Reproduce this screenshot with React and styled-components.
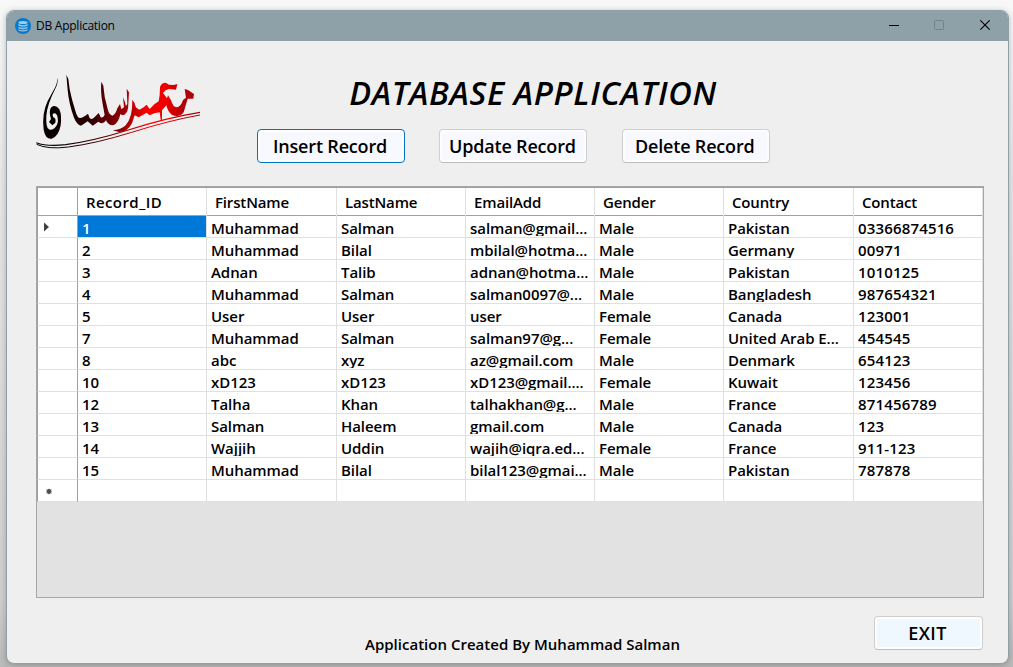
import React from "react";
import styled, { createGlobalStyle } from "styled-components";

const GlobalStyle = createGlobalStyle`
  * { box-sizing: border-box; }
  html, body { margin: 0; height: 100%; overflow: hidden; }
  body {
    font-family: "Open Sans", "Noto Sans", sans-serif;
    color: #000;
    background: linear-gradient(to bottom, #f8f8f8 0, #e6e6e6 30%, #cfcfcf 90%, #b9b9b9 100%);
  }
`;

const Desktop = styled.div`
  height: 667px;
  width: 1013px;
  padding: 10px 4px 3px 6px;
  overflow: hidden;
`;

const Window = styled.main`
  height: 654px;
  display: flex;
  flex-direction: column;
  background: #efefef;
  border: 1px solid #8ea1a8;
  border-radius: 8px;
  overflow: hidden;
  box-shadow: 0 1px 6px rgba(0, 0, 0, 0.24);
`;

const TitleBar = styled.header`
  height: 30px;
  flex: none;
  display: flex;
  align-items: center;
  padding-left: 8px;
  background: #8ea1a8;
`;

const AppName = styled.span`
  margin-left: 5px;
  font-size: 12px;
  line-height: 16px;
  letter-spacing: -0.25px;
  flex: 1;
`;

const Control = styled.span`
  width: 46px;
  height: 30px;
  display: flex;
  align-items: center;
  justify-content: center;
  padding-left: ${(p) => p.$inset || 0};
  padding-bottom: 2px;
`;

const Controls = styled.div`
  display: flex;
`;

const Body = styled.div`
  flex: 1;
  display: flex;
  flex-direction: column;
  padding: 24px 24px 13px 29px;
`;

const Top = styled.section`
  display: flex;
  height: 121px;
  margin-left: -11px;
`;

const Heading = styled.div`
  width: 513px;
  margin-left: 42px;
`;

const Title = styled.h1`
  margin: 0;
  height: 64px;
  padding-top: 6px;
  padding-left: 39px;
  text-align: center;
  font-size: 32.5px;
  line-height: 44px;
  font-weight: 550;
  font-style: italic;
  white-space: nowrap;
  letter-spacing: 0.65px;
`;

const Actions = styled.div`
  display: grid;
  grid-template-columns: 148px 148px 148px;
  column-gap: 34.4px;
`;

const Button = styled.button`
  width: ${(p) => p.$width || "148px"};
  height: 34px;
  padding: 0 2px 1px 0;
  font: 550 18px/24px "Open Sans", "Noto Sans", sans-serif;
  letter-spacing: ${(p) => p.$tracking || "-0.18px"};
  color: #000;
  white-space: nowrap;
  background: ${(p) => p.$fill || "#f8f8ff"};
  border: 1px solid ${(p) => (p.$focused ? "#0074cc" : "#cfcfcf")};
  border-bottom-color: ${(p) => (p.$focused ? "#0074cc" : "#bdbdbd")};
  border-radius: 4px;
  box-shadow: inset 0 0 0 2px #fdfdfd;
`;

const Grid = styled.section`
  height: 412px;
  flex: none;
  background: #e2e2e2;
  border: 1px solid #a5a7ac;
`;

const columns = "41px 129px 130px 129px 129px 129px 130px 129px";

const HeaderRow = styled.div`
  display: grid;
  grid-template-columns: ${columns};
  height: 29px;
  background: #fff;
  border-top: 1px solid #a0a0a0;
  border-bottom: 1px solid #a0a0a0;
`;

const HeadCell = styled.div`
  padding-left: 8px;
  font-size: 15px;
  line-height: 29px;
  font-weight: 550;
  letter-spacing: ${(p) => p.$tracking || "-0.15px"};
  border-right: 1px solid #e0e0e0;
`;

const HeadCorner = styled(HeadCell)`
  border-left: 1px solid #a0a0a0;
  border-right-color: #a0a0a0;
`;

const Row = styled.div`
  display: grid;
  grid-template-columns: ${columns};
  height: 22px;
  background: #fff;
`;

const Cell = styled.div`
  height: 22px;
  padding: 0 4px;
  border-right: 1px solid #e0e0e0;
  border-bottom: 1px solid #e0e0e0;
  background: ${(p) => (p.$selected ? "#0078d7" : "#fff")};
  color: ${(p) => (p.$selected ? "#fff" : "#000")};
`;

const CellText = styled.div`
  height: 20px;
  font-size: 15px;
  line-height: 25px;
  font-weight: 550;
  letter-spacing: ${(p) => (p.$numeric ? "0.16px" : "-0.06px")};
  white-space: nowrap;
  overflow: hidden;
`;

const RowHeader = styled.div`
  display: flex;
  align-items: center;
  padding-left: 6px;
  border-left: 1px solid #a0a0a0;
  border-right: 1px solid #a0a0a0;
  border-bottom: 1px solid #e0e0e0;
`;

const Footer = styled.footer`
  display: flex;
  justify-content: space-between;
  padding: 18px 1px 0 329px;
`;

const Credit = styled.p`
  margin: 17px 0 0;
  font-size: 15px;
  line-height: 22px;
  font-weight: 550;
  white-space: nowrap;
  letter-spacing: 0.01px;
`;

const records = [
  ["1", "Muhammad", "Salman", "salman@gmail...", "Male", "Pakistan", "03366874516"],
  ["2", "Muhammad", "Bilal", "mbilal@hotma...", "Male", "Germany", "00971"],
  ["3", "Adnan", "Talib", "adnan@hotma...", "Male", "Pakistan", "1010125"],
  ["4", "Muhammad", "Salman", "salman0097@...", "Male", "Bangladesh", "987654321"],
  ["5", "User", "User", "user", "Female", "Canada", "123001"],
  ["7", "Muhammad", "Salman", "salman97@g...", "Female", "United Arab E...", "454545"],
  ["8", "abc", "xyz", "az@gmail.com", "Male", "Denmark", "654123"],
  ["10", "xD123", "xD123", "xD123@gmail....", "Female", "Kuwait", "123456"],
  ["12", "Talha", "Khan", "talhakhan@g...", "Male", "France", "871456789"],
  ["13", "Salman", "Haleem", "gmail.com", "Male", "Canada", "123"],
  ["14", "Wajjih", "Uddin", "wajih@iqra.ed...", "Female", "France", "911-123"],
  ["15", "Muhammad", "Bilal", "bilal123@gmai...", "Male", "Pakistan", "787878"],
  ["", "", "", "", "", "", ""],
];

const headings = ["Record_ID", "FirstName", "LastName", "EmailAdd", "Gender", "Country", "Contact"];

function DatabaseIcon() {
  return (
    <svg width="16" height="16" viewBox="0 0 16 16">
      <circle cx="8" cy="8" r="8" fill="#0878c8" />
      <ellipse cx="8" cy="4.4" rx="4.6" ry="1.5" fill="#9fcdec" />
      <path d="M3.4 6.1q4.6 2.2 9.2 0v1.6q-4.6 2.2-9.2 0zM3.4 8.7q4.6 2.2 9.2 0v1.6q-4.6 2.2-9.2 0zM3.4 11.2q4.6 2.2 9.2 0v1.3q-4.6 2.2-9.2 0z" fill="#8fc4e8" />
    </svg>
  );
}

function Logo() {
  return (
    <svg width="190" height="95" viewBox="0 0 570 285">
      <defs>
        <linearGradient id="ink" gradientUnits="userSpaceOnUse" x1="95" y1="0" x2="525" y2="0">
          <stop offset="0" stopColor="#080000" />
          <stop offset="0.25" stopColor="#300003" />
          <stop offset="0.48" stopColor="#a00005" />
          <stop offset="0.62" stopColor="#f50000" />
          <stop offset="0.76" stopColor="#f00000" />
          <stop offset="0.88" stopColor="#b00008" />
          <stop offset="1" stopColor="#b00008" />
        </linearGradient>
      </defs>
      <g fill="url(#ink)">
        <path d="M97 38Q100 53 92 69Q66 119 64 153Q62 188 72 193Q81 198 91 187Q101 176 98 158Q96 145 87 145Q80 147 85 157Q94 160 91 173L82 181L72 171L78 162Q70 137 79 127Q91 117 103 133Q111 151 107 181Q101 215 80 221Q61 223 56 194Q50 145 68 108L91 66Q97 53 97 38Z" />
        <path d="M124 29L130 42L134 73Q140 103 151 137Q157 159 165 159Q175 158 189 146L194 159Q200 166 209 156L221 144L227 157Q234 160 239 150L232 112Q226 77 229 50L235 62Q237 95 248 132Q252 150 263 152Q272 148 277 130L285 117L289 133L297 127L294 97L300 112L303 124L307 116L305 71L312 82L310 117Q310 143 298 149Q290 151 286 147Q281 175 264 181Q249 181 243 166Q235 181 220 170L203 182L188 169L168 182Q156 180 147 158Q132 118 128 76Z" />
        <path d="M322 104L329 115Q330 129 343 134L354 128L365 119L374 132L388 118L401 109L404 90L405 66Q409 53 422 53L432 59L446 60L457 57L453 74L432 72Q420 74 414 84L426 100L429 91L438 106Q444 127 455 127Q467 127 474 105L483 98L479 72L489 75L507 87L505 101L488 101L476 142Q462 160 440 149Q428 139 424 121L411 136L411 165L407 164L404 142L388 145L374 151L365 143L341 157L329 151L321 175Q308 201 282 201L263 196Q288 195 302 181Q323 157 322 104Z" />
      </g>
      <g fill="none" stroke="url(#ink)">
        <path d="M34 233Q65 245 122 239Q205 228 310 195Q425 158 525 142" strokeWidth="3.4" />
        <path d="M35 238Q69 254 130 246Q214 235 320 202Q430 167 525 150" strokeWidth="3" />
      </g>
    </svg>
  );
}

export default function App() {
  return (
    <>
      <GlobalStyle />
      <Desktop>
        <Window>
          <TitleBar>
            <DatabaseIcon />
            <AppName>DB Application</AppName>
            <Controls>
              <Control $inset="2px">
                <svg width="10" height="10"><path d="M0 5.5h10" stroke="#000" /></svg>
              </Control>
              <Control>
                <svg width="10" height="10"><rect x=".5" y=".5" width="9" height="9" rx="1" fill="none" stroke="#70838a" /></svg>
              </Control>
              <Control>
                <svg width="10" height="10"><path d="M.3.3l9.4 9.4M9.7.3L.3 9.7" stroke="#000" strokeWidth="1.1" /></svg>
              </Control>
            </Controls>
          </TitleBar>
          <Body>
            <Top>
              <Logo />
              <Heading>
                <Title>DATABASE APPLICATION</Title>
                <Actions>
                  <Button $focused>Insert Record</Button>
                  <Button>Update Record</Button>
                  <Button>Delete Record</Button>
                </Actions>
              </Heading>
            </Top>
            <Grid>
              <HeaderRow>
                <HeadCorner />
                {headings.map((h) => (
                  <HeadCell key={h} $tracking={h === "Record_ID" ? "0.4px" : undefined}>{h}</HeadCell>
                ))}
              </HeaderRow>
              {records.map((record, r) => (
                <Row key={r}>
                  <RowHeader>
                    {r === 0 && <svg width="6" height="10"><path d="M0 0.5L5 5L0 9.5Z" fill="#404040" /></svg>}
                    {r === 12 && (
                      <svg width="10" height="8">
                        <circle cx="5" cy="4.5" r="2.4" fill="#505050" />
                        <path d="M5 1.8v5.4M2.5 3l5 3M2.5 6l5-3" stroke="#505050" strokeWidth="1" />
                      </svg>
                    )}
                  </RowHeader>
                  {record.map((value, c) => (
                    <Cell key={c} $selected={r === 0 && c === 0}>
                      <CellText $numeric={c === 6}>{value}</CellText>
                    </Cell>
                  ))}
                </Row>
              ))}
            </Grid>
            <Footer>
              <Credit>Application Created By Muhammad Salman</Credit>
              <Button $width="109px" $fill="#f0f8ff" $tracking="0.4px">EXIT</Button>
            </Footer>
          </Body>
        </Window>
      </Desktop>
    </>
  );
}
